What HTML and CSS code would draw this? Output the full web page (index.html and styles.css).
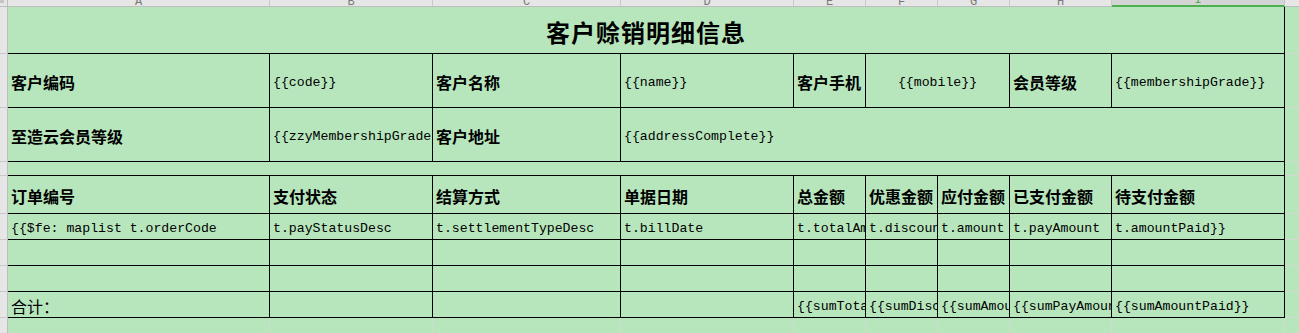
FILE: index.html
```html
<!DOCTYPE html>
<html lang="zh-CN">
<head>
<meta charset="utf-8">
<title>客户赊销明细信息</title>
<link rel="stylesheet" href="styles.css">
</head>
<body>
<div class="sheet">
  <!-- column header row -->
  <div class="corner"><span class="corner-mark"></span></div>
  <div class="ch"><span>A</span></div>
  <div class="ch"><span>B</span></div>
  <div class="ch"><span>C</span></div>
  <div class="ch"><span>D</span></div>
  <div class="ch"><span>E</span></div>
  <div class="ch"><span>F</span></div>
  <div class="ch"><span>G</span></div>
  <div class="ch"><span>H</span></div>
  <div class="ch ch-active"><span>I</span></div>
  <div class="ch"><span>J</span></div>

  <!-- row 1: title -->
  <div class="rh"></div>
  <div class="cell title span9">客户赊销明细信息</div>
  <div class="gl"></div>

  <!-- row 2 -->
  <div class="rh"></div>
  <div class="cell lbl">客户编码</div>
  <div class="cell val">{{code}}</div>
  <div class="cell lbl">客户名称</div>
  <div class="cell val">{{name}}</div>
  <div class="cell lbl">客户手机</div>
  <div class="cell val span2 center">{{mobile}}</div>
  <div class="cell lbl">会员等级</div>
  <div class="cell val">{{membershipGrade}}</div>
  <div class="gl"></div>

  <!-- row 3 -->
  <div class="rh"></div>
  <div class="cell lbl">至造云会员等级</div>
  <div class="cell val">{{zzyMembershipGrade}}</div>
  <div class="cell lbl">客户地址</div>
  <div class="cell val span6">{{addressComplete}}</div>
  <div class="gl"></div>

  <!-- row 4: spacer -->
  <div class="rh"></div>
  <div class="cell span9"></div>
  <div class="gl"></div>

  <!-- row 5: table header -->
  <div class="rh"></div>
  <div class="cell lbl">订单编号</div>
  <div class="cell lbl">支付状态</div>
  <div class="cell lbl">结算方式</div>
  <div class="cell lbl">单据日期</div>
  <div class="cell lbl">总金额</div>
  <div class="cell lbl">优惠金额</div>
  <div class="cell lbl">应付金额</div>
  <div class="cell lbl">已支付金额</div>
  <div class="cell lbl">待支付金额</div>
  <div class="gl"></div>

  <!-- row 6: data template -->
  <div class="rh"></div>
  <div class="cell val">{{$fe: maplist t.orderCode</div>
  <div class="cell val">t.payStatusDesc</div>
  <div class="cell val">t.settlementTypeDesc</div>
  <div class="cell val">t.billDate</div>
  <div class="cell val">t.totalAmount</div>
  <div class="cell val">t.discountAmount</div>
  <div class="cell val">t.amount</div>
  <div class="cell val">t.payAmount</div>
  <div class="cell val">t.amountPaid}}</div>
  <div class="gl"></div>

  <!-- row 7 -->
  <div class="rh"></div>
  <div class="cell"></div><div class="cell"></div><div class="cell"></div>
  <div class="cell"></div><div class="cell"></div><div class="cell"></div>
  <div class="cell"></div><div class="cell"></div><div class="cell"></div>
  <div class="gl"></div>

  <!-- row 8 -->
  <div class="rh"></div>
  <div class="cell"></div><div class="cell"></div><div class="cell"></div>
  <div class="cell"></div><div class="cell"></div><div class="cell"></div>
  <div class="cell"></div><div class="cell"></div><div class="cell"></div>
  <div class="gl"></div>

  <!-- row 9: totals -->
  <div class="rh"></div>
  <div class="cell txt">合计：</div>
  <div class="cell"></div>
  <div class="cell"></div>
  <div class="cell"></div>
  <div class="cell val">{{sumTotalAmount}}</div>
  <div class="cell val">{{sumDiscountAmount}}</div>
  <div class="cell val">{{sumAmount}}</div>
  <div class="cell val">{{sumPayAmount}}</div>
  <div class="cell val">{{sumAmountPaid}}</div>
  <div class="gl"></div>

  <!-- row 10: empty grid -->
  <div class="rh"></div>
  <div class="gl"></div><div class="gl"></div><div class="gl"></div>
  <div class="gl"></div><div class="gl"></div><div class="gl"></div>
  <div class="gl"></div><div class="gl"></div><div class="gl"></div>
  <div class="gl"></div>
</div>
</body>
</html>
```

FILE: styles.css
```css
html, body {
  margin: 0;
  padding: 0;
  background: #b7e6bd;
  overflow: hidden;
}

.sheet {
  display: grid;
  grid-template-columns: 8px 262px 163px 188px 173px 72px 72px 72px 102px 173px 100px;
  grid-template-rows: 7px 47px 54px 54px 14px 38px 26px 26px 26px 26px 26px;
  width: 1385px;
  background: #b7e6bd;
  color: #000;
}

.sheet > div {
  box-sizing: border-box;
  min-width: 0;
  overflow: hidden;
  white-space: nowrap;
}

/* spreadsheet chrome */
.corner {
  background: #e6e6e6;
  border-right: 1px solid #bdbdbd;
  border-bottom: 1px solid #bdbdbd;
}

.corner-mark {
  display: block;
  width: 4px;
  height: 3px;
  background: #c4c4c4;
}

.ch {
  background: #e6e6e6;
  border-right: 1px solid #c8c8c8;
  border-bottom: 1px solid #bdbdbd;
  display: flex;
  justify-content: center;
  align-items: flex-end;
  font-family: "Liberation Mono", monospace;
  font-size: 12px;
  line-height: 12px;
  color: #7a7a7a;
}

.ch span {
  margin-bottom: -2px;
}

.ch-active {
  background: #d4d4d4;
  border-bottom: 2px solid #4caf50;
  color: #4caf50;
}

.ch-active span {
  margin-bottom: -1px;
}

.rh {
  background: #e6e6e6;
  border-right: 1px solid #bdbdbd;
  border-bottom: 1px solid #c8c8c8;
}

.gl {
  border-right: 1px solid #d3d8d3;
  border-bottom: 1px solid #d3d8d3;
}

/* cells */
.cell {
  border-right: 1px solid #000;
  border-bottom: 1px solid #000;
  display: flex;
  align-items: center;
  padding: 3px 3px 0;
}

.span2 { grid-column: span 2; }
.span6 { grid-column: span 6; }
.span9 { grid-column: span 9; }

.center { justify-content: center; }

.title {
  justify-content: center;
  font-family: "Noto Sans CJK SC", sans-serif;
  font-weight: 700;
  font-size: 24px;
  letter-spacing: 1px;
}

.lbl {
  font-family: "Noto Sans CJK SC", sans-serif;
  font-weight: 700;
  font-size: 16px;
}

.txt {
  font-family: "Noto Sans CJK SC", sans-serif;
  font-size: 16px;
}

.val {
  font-family: "Liberation Mono", "Noto Sans CJK SC", monospace;
  font-size: 13.2px;
}
```
